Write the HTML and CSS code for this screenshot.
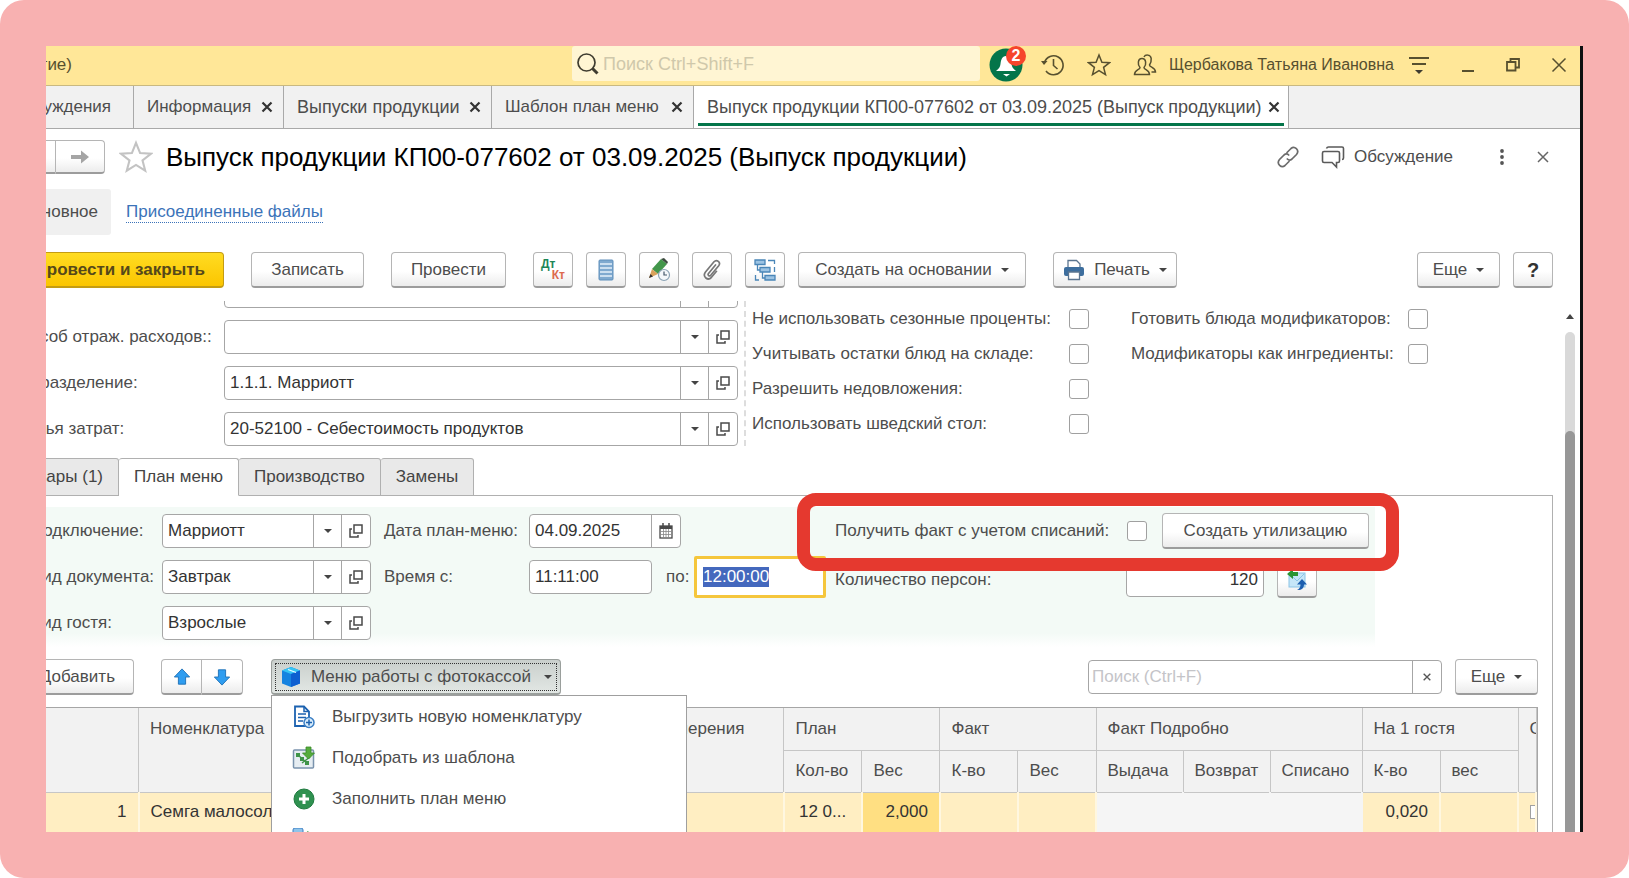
FILE: index.html
```html
<!DOCTYPE html>
<html lang="ru">
<head>
  <meta charset="utf-8">
  <title>Выпуск продукции КП00-077602 от 03.09.2025</title>
  <link rel="stylesheet" href="styles.css">
</head>
<body>
  <!-- shared icons -->
  <svg width="0" height="0" class="sprite">
    <symbol id="i-open" viewBox="0 0 16 16"><path d="M6 2h8v8H6zM4 6H2v8h8v-2" fill="none" stroke="#4a4a4a" stroke-width="1.5"/></symbol>
    <symbol id="i-star" viewBox="0 0 24 24"><path d="M12 2l2.900 7.200 7.600.5-5.900 4.700 1.900 7.200-6.500-4-6.500 4 1.900-7.200-5.900-4.700 7.600-.5z" fill="none" stroke="currentColor" stroke-width="1.500"/></symbol>
    <symbol id="i-x" viewBox="0 0 12 12"><path d="M1.500 1.500l9 9M10.500 1.500l-9 9" fill="none" stroke="currentColor" stroke-width="2.200"/></symbol>
    <symbol id="i-up" viewBox="0 0 20 20"><path d="M10 1l8.500 9H14v8H6v-8H1.500z" fill="#2f9df0" stroke="#1d6fb5"/></symbol>
  </svg>

  <div class="frame">
    <div class="screen">
      <div class="window">

        <header class="titlebar">
          <div class="app-title">(1С:Предприятие)</div>
          <div class="search">
            <svg width="24" height="24" viewBox="0 0 24 24"><circle cx="10.500" cy="10.500" r="8.500" fill="none" stroke="#3f3c30" stroke-width="1.700"/><path d="M16.500 16.500l5 5" stroke="#3f3c30" stroke-width="3"/></svg>
            <input type="text" placeholder="Поиск Ctrl+Shift+F" aria-label="Поиск">
          </div>
          <button class="bell" aria-label="Уведомления">
            <svg width="34" height="34" viewBox="0 0 34 34"><circle cx="17" cy="17" r="16.500" fill="#04754a"/><path d="M17 8c4 0 5 4 5.500 8 .4 3 1.500 4.500 4.500 7H7c3-2.500 4.100-4 4.500-7 .5-4 1.500-8 5.500-8z" fill="#fff"/><path d="M14 26h7l-3.500 2.500z" fill="#fff"/></svg>
            <span class="badge">2</span>
          </button>
          <div class="title-icons">
            <button aria-label="История"><svg width="24" height="24" viewBox="0 0 24 24" fill="none" stroke="#57502f" stroke-width="1.600"><path d="M3.500 9.500A9.500 9.500 0 1 1 5 18"/><path d="M12.500 6v6.500l4 3.500"/><path d="M0 8l3 4L6.500 8z" fill="#57502f" stroke="none"/></svg></button>
            <button aria-label="Избранное"><svg width="24" height="24"><use href="#i-star"/></svg></button>
            <button aria-label="Пользователи"><svg width="24" height="24" viewBox="0 0 24 24" fill="none" stroke="#57502f" stroke-width="1.500"><path d="M7 14.500c-2.500-2.500-2.500-9 2-9s4.500 6.500 2 9c0 2.500 5.500 2 5.500 7h-15c0-5 5.500-4.500 5.500-7z"/><path d="M11 4c1.200-2.500 6.500-3 7.200 1.500.3 3-.7 5-1.700 6.500 0 2.500 6 2 6 7h-4"/></svg></button>
          </div>
          <span class="user">Щербакова Татьяна Ивановна</span>
          <div class="window-icons">
            <button aria-label="Меню"><svg width="22" height="22" viewBox="0 0 22 22"><path d="M1 4h20M4 10h14" stroke="#57502f" stroke-width="1.800"/><path d="M7 16h8l-4 4z" fill="#3f3c30"/></svg></button>
            <button aria-label="Свернуть"><svg width="14" height="22" viewBox="0 0 14 22"><path d="M1 17h12" stroke="#57502f" stroke-width="2"/></svg></button>
            <button aria-label="Развернуть"><svg width="14" height="16" viewBox="0 0 14 16" fill="none" stroke="#57502f" stroke-width="1.800"><path d="M1 5h8.500v8.500H1zM4.500 5V2H13v8.500H9.500"/></svg></button>
            <button aria-label="Закрыть"><svg width="16" height="16" viewBox="0 0 16 16"><path d="M1.500 1.500l13 13M14.500 1.500l-13 13" stroke="#57502f" stroke-width="1.500"/></svg></button>
          </div>
        </header>

        <nav class="page-tabs">
          <div class="page-tab first"><span>Обсуждения</span></div>
          <div class="page-tab info"><span>Информация</span><button class="tab-x" aria-label="Закрыть"><svg width="12" height="12"><use href="#i-x"/></svg></button></div>
          <div class="page-tab list"><span>Выпуски продукции</span><button class="tab-x" aria-label="Закрыть"><svg width="12" height="12"><use href="#i-x"/></svg></button></div>
          <div class="page-tab template"><span>Шаблон план меню</span><button class="tab-x" aria-label="Закрыть"><svg width="12" height="12"><use href="#i-x"/></svg></button></div>
          <div class="page-tab active"><span>Выпуск продукции КП00-077602 от 03.09.2025 (Выпуск продукции)</span><button class="tab-x" aria-label="Закрыть"><svg width="12" height="12"><use href="#i-x"/></svg></button></div>
        </nav>

        <div class="heading">
          <div class="btn-pair history">
            <button class="btn" aria-label="Назад"></button>
            <button class="btn" aria-label="Вперед"><svg width="20" height="16" viewBox="0 0 20 16"><path d="M1 6h10V1.500L19 8l-8 6.500V10H1z" fill="#a5a5a5"/></svg></button>
          </div>
          <button class="fav" aria-label="В избранное"><svg width="34" height="34"><use href="#i-star"/></svg></button>
          <h1>Выпуск продукции КП00-077602 от 03.09.2025 (Выпуск продукции)</h1>
          <div class="heading-tools">
            <button aria-label="Ссылка"><svg width="24" height="24" viewBox="0 0 24 24" fill="none" stroke="#6b6b6b" stroke-width="1.700" stroke-linecap="round"><path d="M11 7.500l4-4c3.500-3 9 1.500 5.500 6l-4.500 4.500c-1.500 1.300-3.500 1.200-4.700 0"/><path d="M13 16.500l-4 4c-3.500 3-9-1.500-5.500-6L8 10c1.500-1.300 3.500-1.200 4.700 0"/></svg></button>
            <button class="discuss"><svg width="24" height="24" viewBox="0 0 24 24" fill="none" stroke="#5a5a5a" stroke-width="1.600"><path d="M3 6.500h14q1.500 0 1.500 1.500v8q0 1.500-1.500 1.500h-1.500V22L11 17.500H3Q1.500 17.500 1.500 16V8Q1.500 6.500 3 6.500z"/><path d="M5.500 3.500Q6 2 7.500 2H21q1.500 0 1.500 1.500V13q0 1.500-1.500 1.500"/></svg>Обсуждение</button>
            <button class="dots" aria-label="Еще"><svg width="6" height="16" viewBox="0 0 6 16" fill="#555"><circle cx="3" cy="2" r="1.900"/><circle cx="3" cy="8" r="1.900"/><circle cx="3" cy="14" r="1.900"/></svg></button>
            <button aria-label="Закрыть"><svg width="12" height="12" viewBox="0 0 12 12"><path d="M1 1l10 10M11 1L1 11" stroke="#666" stroke-width="1.500"/></svg></button>
          </div>
        </div>

        <nav class="sections">
          <span class="current">Основное</span>
          <a href="#files">Присоединенные файлы</a>
        </nav>

        <div class="toolbar">
          <button class="btn primary">Провести и закрыть</button>
          <button class="btn gap write">Записать</button>
          <button class="btn gap post">Провести</button>
          <button class="btn icon gap" aria-label="Дт Кт"><span class="dtkt"><b>Дт</b><b>Кт</b></span></button>
          <button class="btn icon" aria-label="Список"><svg width="16" height="22" viewBox="0 0 16 22"><rect x="1" y="1" width="14" height="20" rx="1" fill="#7fa9cf" stroke="#5f8fbb"/><path d="M2 5h12M2 9h12M2 13h12M2 17h12" stroke="#e5f0fa" stroke-width="1.600"/></svg></button>
          <button class="btn icon" aria-label="Изменить"><svg width="24" height="24" viewBox="0 0 24 24"><path d="M5 11L14 1l6 5-9 10z" fill="#43974b"/><path d="M14 1l3-1 4 4-1 2z" fill="#3d4a3f"/><path d="M5 11l6 5-9 4z" fill="#d9a15b"/><path d="M3.500 16L2 20l4-1.500z" fill="#333"/><circle cx="17" cy="17" r="5.500" fill="#f4f8fb" stroke="#8ba3b5" stroke-width="1.200"/><path d="M17 13.500V17h3" fill="none" stroke="#44586a" stroke-width="1.200"/></svg></button>
          <button class="btn icon" aria-label="Файлы"><svg width="20" height="22" viewBox="0 0 20 22" fill="none" stroke="#777" stroke-width="1.700" stroke-linecap="round"><path d="M13.500 6l-7 8.500c-1.200 1.500.8 3.300 2.200 1.800l8-9.500c2.500-3.500-2-7-4.700-4l-8.700 10.500c-3 4.500 2.500 9 6.200 5l5-6"/></svg></button>
          <button class="btn icon" aria-label="Структура"><svg width="22" height="24" viewBox="0 0 22 24" fill="#9cc3e3" stroke="#4a86b8" stroke-width="1.300"><path d="M1 2h10v4.500H1zM6 9.500h10V14H6zM11 17.500h10V22H11z"/><path d="M3.500 6.500V12H6M8.500 14v6H11M14 2.500h6.500V6M1.500 17v5H5M20.500 9v5" fill="none"/></svg></button>
          <button class="btn based">Создать на основании<i class="caret"></i></button>
          <button class="btn gap print"><svg width="22" height="22" viewBox="0 0 22 22"><path d="M5 8V1.500h8.500L17 5v3" fill="#fff" stroke="#5b7590" stroke-width="1.300"/><rect x="1" y="8" width="20" height="9" rx="2" fill="#3d6e9e"/><path d="M5.500 13h11v7.500h-11z" fill="#fff" stroke="#5b7590" stroke-width="1.300"/></svg>Печать<i class="caret"></i></button>
          <button class="btn more push">Еще<i class="caret"></i></button>
          <button class="btn icon help">?</button>
        </div>

        <div class="content">
          <div class="form">
            <div class="details">
              <div class="fields">
                <div class="field">
                  <label for="f-org">Организация:</label>
                  <div class="combo"><select id="f-org"><option></option></select><i class="drop"></i><button aria-label="Открыть"></button></div>
                </div>
                <div class="field">
                  <label for="f-way">Способ отраж. расходов::</label>
                  <div class="combo"><select id="f-way"><option></option></select><i class="drop"></i><button aria-label="Открыть"><svg width="16" height="16"><use href="#i-open"/></svg></button></div>
                </div>
                <div class="field">
                  <label for="f-dep">Подразделение:</label>
                  <div class="combo"><select id="f-dep"><option>1.1.1. Марриотт</option></select><i class="drop"></i><button aria-label="Открыть"><svg width="16" height="16"><use href="#i-open"/></svg></button></div>
                </div>
                <div class="field">
                  <label for="f-cost">Статья затрат:</label>
                  <div class="combo"><select id="f-cost"><option>20-52100 - Себестоимость продуктов</option></select><i class="drop"></i><button aria-label="Открыть"><svg width="16" height="16"><use href="#i-open"/></svg></button></div>
                </div>
              </div>
              <div class="checks first">
                <label for="c1">Не использовать сезонные проценты:</label><input type="checkbox" id="c1">
                <label for="c2">Учитывать остатки блюд на складе:</label><input type="checkbox" id="c2">
                <label for="c3">Разрешить недовложения:</label><input type="checkbox" id="c3">
                <label for="c4">Использовать шведский стол:</label><input type="checkbox" id="c4">
              </div>
              <div class="checks second">
                <label for="c5">Готовить блюда модификаторов:</label><input type="checkbox" id="c5">
                <label for="c6">Модификаторы как ингредиенты:</label><input type="checkbox" id="c6">
              </div>
            </div>

            <div class="form-tabs">
              <button class="goods">Товары (1)</button>
              <button class="active">План меню</button>
              <button>Производство</button>
              <button>Замены</button>
              <span class="rest"></span>
            </div>

            <section class="panel">
              <div class="params">
                <div class="col links">
                  <div class="row"><label for="p-conn">Подключение:</label><div class="combo"><select id="p-conn"><option>Марриотт</option></select><i class="drop"></i><button aria-label="Открыть"><svg width="16" height="16"><use href="#i-open"/></svg></button></div></div>
                  <div class="row"><label for="p-doc">Вид документа:</label><div class="combo"><select id="p-doc"><option>Завтрак</option></select><i class="drop"></i><button aria-label="Открыть"><svg width="16" height="16"><use href="#i-open"/></svg></button></div></div>
                  <div class="row"><label for="p-guest">Вид гостя:</label><div class="combo"><select id="p-guest"><option>Взрослые</option></select><i class="drop"></i><button aria-label="Открыть"><svg width="16" height="16"><use href="#i-open"/></svg></button></div></div>
                </div>
                <div class="col times">
                  <div class="row">
                    <label for="p-date">Дата план-меню:</label>
                    <div class="combo date"><input type="text" id="p-date" value="04.09.2025"><button aria-label="Календарь"><svg width="14" height="16" viewBox="0 0 14 16"><rect x="1" y="3" width="12" height="12" fill="#fff" stroke="#4a4a4a" stroke-width="1.300"/><path d="M1 4.500h12" stroke="#4a4a4a" stroke-width="3"/><path d="M4 0v4M10 0v4" stroke="#4a4a4a" stroke-width="1.500"/><path d="M2 8.500h10M2 11.500h10M4.500 6v9M7 6v9M9.500 6v9" stroke="#888" stroke-width=".8"/></svg></button></div>
                  </div>
                  <div class="row">
                    <label for="p-from">Время с:</label>
                    <input class="box time" type="text" id="p-from" value="11:11:00">
                    <label class="to" for="p-to">по:</label>
                    <input class="box focus" type="text" id="p-to" value="12:00:00">
                  </div>
                </div>
                <div class="col facts">
                  <div class="row utilize">
                    <label for="p-fact">Получить факт с учетом списаний:</label>
                    <input type="checkbox" id="p-fact">
                    <button class="btn">Создать утилизацию</button>
                    <div class="highlight"></div>
                  </div>
                  <div class="row">
                    <label for="p-count">Количество персон:</label>
                    <input class="box count" type="text" id="p-count" value="120">
                    <button class="btn icon" aria-label="Обновить"><svg width="22" height="24" viewBox="0 0 22 24"><rect x="3" y="5" width="16" height="14" fill="#c6e6f8" stroke="#8cc4e6"/><path d="M4 6l7 7 7-7" fill="none" stroke="#8cc4e6"/><path d="M1 6l6-5v3h5v4H7v3z" fill="#2c9434"/><path d="M16 11l5 5.500h-3c0 4-3 6-7 5.500 2-1 3.500-2.500 3.500-5.500H11z" fill="#1d5fb0"/></svg></button>
                  </div>
                </div>
              </div>

              <div class="table-bar">
                <button class="btn add">Добавить</button>
                <div class="btn-pair arrows">
                  <button class="btn" aria-label="Вверх"><svg width="18" height="18"><use href="#i-up"/></svg></button>
                  <button class="btn" aria-label="Вниз"><svg class="down" width="18" height="18"><use href="#i-up"/></svg></button>
                </div>
                <div class="menu-wrap">
                  <button class="btn pressed"><svg width="20" height="22" viewBox="0 0 20 22"><path d="M10 1l9 3.500v13L10 21l-9-3.500v-13z" fill="#1583e0"/><path d="M10 1l9 3.500L10 8 1 4.500z" fill="#35c4f5"/><path d="M10 8v13l9-3.500v-13z" fill="#0d5fd0"/><path d="M7 3.500l8 3" stroke="#e9fbff" stroke-width="1.200"/></svg>Меню работы с фотокассой<i class="caret"></i></button>
                  <ul class="menu">
                    <li><button><svg width="24" height="24" viewBox="0 0 24 24"><path d="M3 1.500h9l5 5V21H3z" fill="#fff" stroke="#1c62b0" stroke-width="1.800"/><path d="M12 1.500v5h5" fill="none" stroke="#1c62b0" stroke-width="1.500"/><path d="M6 9h8M6 12.500h8M6 16h5" stroke="#1c62b0" stroke-width="1.500"/><circle cx="17" cy="17.500" r="5" fill="#d8ecfb" stroke="#3c7fc4" stroke-width="1.500"/><path d="M17 14.500v6M14 17.500h6" stroke="#1c62b0" stroke-width="1.500"/></svg>Выгрузить новую номенклатуру</button></li>
                    <li><button><svg width="24" height="24" viewBox="0 0 24 24"><rect x="1.500" y="4" width="20" height="18" rx="1" fill="#e6edf2" stroke="#7a93ad" stroke-width="1.500"/><path d="M4 7h4v4H4zM8 11h4v4H8zM13 15h4v4h-4z" fill="#3f9448"/><path d="M6 9l9 8M18 11l-8 6" stroke="#3f9448" stroke-width="1.500"/><path d="M14 1h5v6h3.500l-6 6-6-6H14z" fill="#55ac3c" stroke="#3a8a2a" stroke-width=".8"/></svg>Подобрать из шаблона</button></li>
                    <li><button><svg width="24" height="24" viewBox="0 0 24 24"><circle cx="12" cy="12" r="10" fill="#2f9150" stroke="#1f7a3f"/><path d="M12 7v10M7 12h10" stroke="#fff" stroke-width="3"/></svg>Заполнить план меню</button></li>
                    <li><button><svg width="24" height="24" viewBox="0 0 24 24"><rect x="1" y="0" width="10" height="10" rx="2" fill="#8fc4ea" stroke="#3c7fc4"/><path d="M11 7l5-4 3 5z" fill="#2c9434"/></svg>Очистить таблицу</button></li>
                  </ul>
                </div>
                <div class="combo find"><input type="text" placeholder="Поиск (Ctrl+F)" aria-label="Поиск в таблице"><button aria-label="Очистить"><svg width="8" height="8" viewBox="0 0 12 12"><path d="M1 1l10 10M11 1L1 11" stroke="#555" stroke-width="2"/></svg></button></div>
                <button class="btn more">Еще<i class="caret"></i></button>
              </div>

              <div class="table-wrap">
                <table>
                  <colgroup>
                    <col class="w-num"><col><col class="w-unit"><col class="w-q"><col class="w-q"><col class="w-q"><col class="w-q"><col class="w-out"><col class="w-out"><col class="w-off"><col class="w-q"><col class="w-q"><col class="w-end">
                  </colgroup>
                  <thead>
                    <tr>
                      <th rowspan="2"></th><th rowspan="2">Номенклатура</th><th rowspan="2">Единица измерения</th>
                      <th colspan="2">План</th><th colspan="2">Факт</th><th colspan="3">Факт Подробно</th><th colspan="2">На 1 гостя</th><th rowspan="2">С</th>
                    </tr>
                    <tr>
                      <th>Кол-во</th><th>Вес</th><th>К-во</th><th>Вес</th><th>Выдача</th><th>Возврат</th><th>Списано</th><th>К-во</th><th>вес</th>
                    </tr>
                  </thead>
                  <tbody>
                    <tr>
                      <td class="num">1</td><td>Семга малосольная</td><td></td><td>12 0...</td><td class="num picked">2,000</td><td></td><td></td>
                      <td class="locked"></td><td class="locked"></td><td class="locked"></td><td class="num">0,020</td><td></td><td><input type="checkbox" class="mini" aria-label="С"></td>
                    </tr>
                  </tbody>
                </table>
              </div>
            </section>
          </div>

          <div class="scrollbar">
            <i class="up"></i>
            <div class="track"><div class="thumb"></div></div>
          </div>
        </div>
      </div>
    </div>
  </div>

  <script>
    // the end time is being edited
    const endTime = document.getElementById('p-to');
    endTime.focus({ preventScroll: true });
    endTime.select();
  </script>
</body>
</html>
```
FILE: styles.css
```css
* {
  box-sizing: border-box;
}
body {
  margin: 0;
  background: #fff;
  font-family: "Liberation Sans", Arial, sans-serif;
  font-size: 17px;
  line-height: 22px;
  color: #4d4d4d;
}
button, input, select {
  font: inherit;
  color: inherit;
  margin: 0;
}
button {
  padding: 0;
  border: 0;
  background: none;
  white-space: nowrap;
}
svg {
  display: block;
  flex: none;
}
label {
  white-space: nowrap;
}
.sprite {
  position: absolute;
}
.frame {
  height: 100vh;
  padding: 46px;
  background: #f8b1b1;
  border-radius: 24px;
}
.screen {
  height: 100%;
  overflow: hidden;
  background: #fff;
  border-right: 3px solid #0d1010;
}
.window {
  height: 100%;
  margin-left: -46px;
  display: flex;
  flex-direction: column;
}

/* title bar */
.titlebar {
  flex: none;
  height: 40px;
  display: flex;
  align-items: center;
  background: #ffe798;
  border-bottom: 1px solid #c9b981;
  padding: 0 13px 2px 0;
  color: #57502f;
}
.app-title {
  width: 72px;
  display: flex;
  justify-content: flex-end;
  white-space: nowrap;
}
.titlebar button {
  color: #57502f;
}
.search {
  flex: 1;
  height: 35px;
  margin-left: 500px;
  align-self: flex-start;
  padding-left: 4px;
  display: flex;
  align-items: center;
  gap: 3px;
  background: #fff5d3;
  border-radius: 3px;
}
.search input {
  flex: 1;
  border: 0;
  padding: 0;
  background: none;
  font-size: 18px;
}
.search input::placeholder {
  color: #cfc8ab;
}
.bell {
  position: relative;
  margin: 0 18px 0 9px;
}
.badge {
  position: absolute;
  top: -2px;
  right: -3px;
  width: 20px;
  height: 20px;
  border-radius: 50%;
  background: #f6452c;
  color: #fff;
  font-size: 16px;
  line-height: 20px;
  font-weight: bold;
}
.title-icons {
  display: flex;
  gap: 22px;
}
.user {
  margin-left: 12px;
  font-size: 16px;
  white-space: nowrap;
}
.window-icons {
  display: flex;
  align-items: center;
  gap: 31px;
  margin-left: 14px;
}

/* open pages */
.page-tabs {
  flex: none;
  height: 43px;
  display: flex;
  background: #f1f1f1;
  border-bottom: 1px solid #a9a9a9;
}
.page-tab {
  display: flex;
  align-items: center;
  justify-content: space-between;
  padding: 0 10px 0 13px;
  border-right: 1px solid #a9a9a9;
  white-space: nowrap;
}
.page-tab.first {
  width: 134px;
  justify-content: flex-end;
  padding-right: 22px;
}
.info {
  width: 150px;
}
.list {
  width: 208px;
}
.template {
  width: 202px;
}
.list, .page-tab.active {
  font-size: 18px;
}
.page-tab.active {
  padding-right: 8px;
  background: linear-gradient(#04754a, #04754a) 4px 37px / calc(100% - 8px) 3px no-repeat #fff;
}
.tab-x {
  margin-left: 6px;
  color: #333;
}

/* heading */
.heading {
  flex: none;
  display: flex;
  align-items: center;
  padding: 11px 31px 0 0;
}
.btn {
  height: 36px;
  display: flex;
  align-items: center;
  justify-content: center;
  background: linear-gradient(#fff 55%, #ececec);
  border: 1px solid #b5b5b5;
  border-bottom: 2px solid #9c9c9c;
  border-radius: 4px;
}
.btn-pair {
  display: flex;
}
.btn-pair .btn:first-child {
  border-radius: 4px 0 0 4px;
}
.btn-pair .btn:last-child {
  border-radius: 0 4px 4px 0;
  border-left: 0;
}
.history .btn {
  width: 49px;
  height: 34px;
}
.history .btn:first-child {
  width: 56px;
}
.fav {
  margin-left: 14px;
  color: #c3c3c3;
}
h1 {
  margin: 0 0 0 13px;
  font-size: 26px;
  line-height: 34px;
  font-weight: normal;
  color: #000;
  white-space: nowrap;
}
.heading-tools {
  margin-left: auto;
  display: flex;
  align-items: center;
}
.discuss {
  display: flex;
  align-items: center;
  gap: 9px;
  margin-left: 21px;
}
.dots {
  margin: 0 32px 0 46px;
}
.sections {
  flex: none;
  display: flex;
  align-items: center;
  gap: 15px;
  padding-top: 15px;
}
.sections .current {
  width: 111px;
  height: 46px;
  line-height: 46px;
  padding-right: 13px;
  text-align: right;
  background: #f0f0f0;
  border-radius: 3px;
}
.sections a {
  color: #3b73b9;
  text-decoration: none;
  line-height: 20px;
  border-bottom: 1px dotted #3b73b9;
}

/* commands */
.toolbar {
  flex: none;
  display: flex;
  gap: 13px;
  padding: 17px 27px 13px 0;
}
.gap {
  margin-left: 14px;
}
.push {
  margin-left: auto;
}
.primary {
  width: 224px;
  justify-content: flex-end;
  padding-right: 18px;
  font-weight: bold;
  color: #55481a;
  background: linear-gradient(#ffdc22, #fbc500);
  border-color: #c49c12;
}
.write {
  width: 113px;
}
.post {
  width: 115px;
}
.icon {
  width: 40px;
}
.based {
  width: 228px;
}
.print {
  width: 124px;
  gap: 9px;
}
.more {
  width: 83px;
}
.help {
  font-weight: bold;
  font-size: 20px;
  color: #333;
}
.caret {
  margin-left: 9px;
  border: 4px solid transparent;
  border-top: 4px solid #444;
  border-bottom: 0;
}
.print .caret {
  margin-left: 0;
}
.dtkt {
  display: flex;
  flex-direction: column;
  width: 24px;
  font-size: 12px;
  line-height: 11px;
  text-align: left;
  color: #1d8657;
}
.dtkt b:last-child {
  text-align: right;
  color: #dd6a4e;
}

/* document form */
.content {
  flex: 1;
  min-height: 0;
  display: flex;
}
.form {
  flex: 1;
  min-width: 0;
  overflow: hidden;
  display: flex;
  flex-direction: column;
}
.details {
  flex: none;
  height: 145px;
  display: flex;
  overflow: hidden;
}
.fields {
  display: flex;
  flex-direction: column;
  justify-content: flex-end;
  gap: 12px;
  width: 746px;
  padding-right: 6px;
  border-right: 2px dashed #ddd;
}
.field {
  display: flex;
  align-items: center;
}
.field label {
  width: 224px;
  padding-left: 9px;
}
.combo {
  flex: 1;
  display: grid;
  grid-template-columns: 1fr 28px 29px;
  height: 34px;
  background: #fff;
  border: 1px solid #a6a6a6;
  border-radius: 4px;
}
.combo select, .combo input {
  grid-area: 1 / 1 / 2 / 3;
  min-width: 0;
  appearance: none;
  border: 0;
  padding: 0 0 0 5px;
  background: none;
  color: #333;
  outline: none;
}
.combo .drop {
  grid-area: 1 / 2;
  display: flex;
  align-items: center;
  justify-content: center;
  border-left: 1px solid #a6a6a6;
  pointer-events: none;
}
.combo .drop::after {
  content: "";
  border: 4px solid transparent;
  border-top: 4px solid #444;
  border-bottom: 0;
}
.combo button {
  grid-area: 1 / 3;
  display: flex;
  align-items: center;
  justify-content: center;
  border-left: 1px solid #a6a6a6;
}
.checks {
  display: grid;
  grid-template-columns: 1fr 20px;
  grid-auto-rows: 20px;
  row-gap: 15px;
  align-items: center;
  align-content: start;
  padding-top: 8px;
}
.checks.first {
  width: 337px;
  margin-left: 6px;
}
.checks.second {
  width: 297px;
  margin-left: 42px;
}
input[type="checkbox"] {
  appearance: none;
  width: 20px;
  height: 20px;
  background: #fff;
  border: 1px solid #a0a0a0;
  border-radius: 3px;
}

.form-tabs {
  flex: none;
  display: flex;
  height: 38px;
  margin: 12px 7px 0 0;
}
.form-tabs button {
  padding: 0 15px;
  background: #e9e9e9;
  border: solid #b0b0b0;
  border-width: 1px 1px 1px 0;
  border-radius: 3px 3px 0 0;
  color: #444;
}
.form-tabs .goods {
  width: 119px;
  text-align: right;
}
.form-tabs .active {
  background: #fff;
  border-bottom-color: #fff;
}
.rest {
  flex: 1;
  border-bottom: 1px solid #b0b0b0;
}
.panel {
  flex: 1;
  margin-right: 7px;
  padding-top: 11px;
  border-right: 1px solid #b0b0b0;
}
.params {
  display: flex;
  width: fit-content;
  height: 140px;
  padding: 7px 6px 0 31px;
  background: linear-gradient(#f3faf6 90%, #fff);
}
.col {
  display: flex;
  flex-direction: column;
  gap: 12px;
}
.row {
  height: 34px;
  display: flex;
  align-items: center;
}
.links {
  width: 340px;
}
.links label {
  width: 131px;
}
.times {
  width: 442px;
  margin: 0 9px 0 13px;
}
.times label {
  width: 145px;
}
.times .to {
  width: 42px;
  padding-left: 14px;
}
.date {
  flex: none;
  width: 152px;
}
.box {
  height: 34px;
  padding: 0 5px;
  background: #fff;
  border: 1px solid #a6a6a6;
  border-radius: 4px;
  color: #333;
}
.time {
  width: 123px;
}
.focus {
  width: 132px;
  height: 42px;
  padding-left: 6px;
  border: 3px solid #f5c63c;
  border-radius: 2px;
  outline: none;
}
.focus::selection {
  background: #4468bd;
  color: #fff;
}
.facts {
  gap: 15px;
}
.facts label {
  width: 291px;
}
.utilize {
  position: relative;
}
.utilize input {
  margin: 0 15px 0 1px;
}
.utilize .btn {
  width: 207px;
}
.highlight {
  position: absolute;
  top: -21px;
  right: -30px;
  bottom: -23px;
  left: -38px;
  border: 13px solid #e5392f;
  border-radius: 19px;
  pointer-events: none;
  z-index: 1;
}
.count {
  width: 138px;
  margin-right: 13px;
  text-align: right;
}

/* table commands */
.table-bar {
  display: flex;
  align-items: center;
  padding: 12px 14px 12px 0;
}
.add {
  width: 134px;
  justify-content: flex-end;
  padding-right: 18px;
}
.arrows {
  margin: 0 28px 0 27px;
}
.arrows .btn {
  width: 41px;
}
.down {
  transform: rotate(180deg);
}
.menu-wrap {
  position: relative;
}
.pressed {
  width: 290px;
  justify-content: flex-start;
  padding: 0 8px 0 9px;
  background: linear-gradient(#c9cfcc, #e2e7e4);
  border-color: #9a9f9c;
  gap: 10px;
  outline: 1px dotted #333;
  outline-offset: -5px;
}
.pressed .caret {
  margin-left: auto;
}
.menu {
  position: absolute;
  top: 100%;
  left: 0;
  width: 416px;
  margin: 0;
  padding: 0;
  list-style: none;
  background: #fff;
  border: 1px solid #9f9f9f;
  z-index: 1;
}
.menu button {
  display: flex;
  align-items: center;
  gap: 16px;
  width: 100%;
  height: 41px;
  padding-left: 20px;
}
.find {
  flex: none;
  width: 354px;
  margin: 0 13px 0 auto;
}
.find input {
  padding-left: 3px;
}
.find input::placeholder {
  color: #c4c4c8;
}
.table-wrap {
  margin-right: 14px;
  border: solid #a6a6a6;
  border-width: 1px 1px 0 0;
}
table {
  width: 100%;
  table-layout: fixed;
  border-collapse: collapse;
}
.w-num {
  width: 138px;
}
.w-unit {
  width: 210px;
}
.w-q {
  width: 78px;
}
.w-out {
  width: 87px;
}
.w-off {
  width: 92px;
}
.w-end {
  width: 18px;
}
th, td {
  padding: 0 11px;
  text-align: left;
  white-space: nowrap;
  overflow: hidden;
}
th {
  height: 42px;
  font-weight: normal;
  background: #f2f2f2;
  border: 1px solid #c6c6c6;
  border-top: 0;
}
th[rowspan] {
  vertical-align: top;
  padding-top: 10px;
}
td {
  height: 40px;
  background: #ffeec2;
  border-right: 2px solid #fff7e0;
  color: #333;
}
td:nth-child(4) {
  padding-left: 14px;
}
.num {
  text-align: right;
}
.picked {
  background: #ffdf82;
}
.locked {
  background: #f5f5f5;
  border-color: #f5f5f5;
}
input.mini {
  width: 14px;
  height: 14px;
  display: block;
  border-radius: 0;
}

/* vertical scroll */
.scrollbar {
  width: 20px;
  padding: 13px 5px 0;
  display: flex;
  flex-direction: column;
  align-items: center;
}
.scrollbar .up {
  border: 4px solid transparent;
  border-bottom: 5px solid #444;
  border-top: 0;
}
.track {
  flex: 1;
  width: 10px;
  margin-top: 13px;
  padding-top: 99px;
  background: #d9d9d9;
  border-radius: 5px 5px 0 0;
}
.thumb {
  height: 100%;
  background: #979797;
  border-radius: 5px 5px 0 0;
}
```
